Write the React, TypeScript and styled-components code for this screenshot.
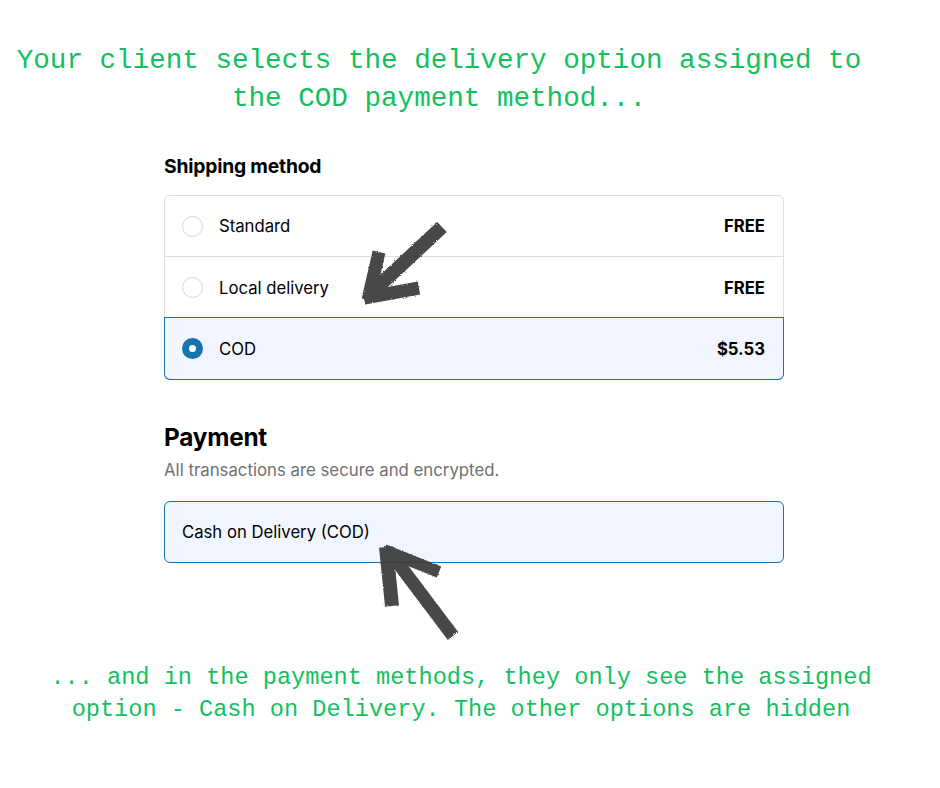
import React from "react"
import styled, { createGlobalStyle } from "styled-components"

const GlobalStyle = createGlobalStyle`
  html, body {
    margin: 0;
    padding: 0;
    background: #fff;
  }
  body {
    font-family: Inter, "Liberation Sans", sans-serif;
    color: #000;
  }
`

const Page = styled.div`
  position: relative;
  width: 940px;
  height: 788px;
  overflow: hidden;
`

const Caption = styled.p<{ $size: number; $line: number; $shift: number }>`
  margin: 0;
  font-family: "Liberation Mono", "DejaVu Sans Mono", monospace;
  font-size: ${(p) => p.$size}px;
  line-height: ${(p) => p.$line}px;
  color: #12c15e;
  text-align: center;
  padding-right: ${(p) => p.$shift}px;
  white-space: pre-line;
`

const TopCaption = styled(Caption)`
  padding-top: 42px;
`

const BottomCaption = styled(Caption)`
  margin-top: 99px;
`

const Checkout = styled.div`
  width: 620px;
  margin-left: 164px;
  margin-top: 36px;
`

const SectionTitle = styled.h2<{ $size: number; $line: number; $gap?: number }>`
  margin: ${(p) => p.$gap ?? 0}px 0 0;
  font-size: ${(p) => p.$size}px;
  line-height: ${(p) => p.$line}px;
  font-weight: 700;
  letter-spacing: -0.2px;
`

const Subtitle = styled.p`
  margin: 8px 0 0;
  font-size: 16.8px;
  line-height: 20px;
  color: #707070;
`

const OptionList = styled.div`
  margin-top: 17px;
  border: 1px solid #dedede;
  border-radius: 6px;
`

const OptionRow = styled.div<{ $selected?: boolean }>`
  display: flex;
  align-items: center;
  gap: 16px;
  height: ${(p) => (p.$selected ? "61px" : "62px")};
  padding: 0 18px;
  box-sizing: border-box;
  font-size: 16.7px;
  background: ${(p) => (p.$selected ? "#f0f5ff" : "transparent")};
  border-top: ${(p) => (p.$selected ? "none" : "1px solid #dedede")};
  box-shadow: ${(p) => (p.$selected ? "0 0 0 1px #1773b0" : "none")};
  border-radius: ${(p) => (p.$selected ? "0 0 5px 5px" : "0")};

  &:first-child {
    border-top: none;
    height: 60px;
  }
`

const Radio = styled.span<{ $checked?: boolean }>`
  flex: none;
  width: 21px;
  height: 21px;
  box-sizing: border-box;
  border-radius: 50%;
  background: #fff;
  border: ${(p) => (p.$checked ? "7px solid #1773b0" : "1px solid #d6d6d6")};
  margin-left: -1px;
`

const Label = styled.span`
  flex: 1;
`

const Price = styled.span`
  font-weight: 700;
`

const PaymentBox = styled.div`
  margin-top: 21px;
  height: 62px;
  box-sizing: border-box;
  display: flex;
  align-items: center;
  padding: 0 17px;
  background: #f0f5ff;
  border: 1px solid #1773b0;
  border-radius: 6px;
  font-size: 16.7px;
`

const Marks = styled.svg`
  position: absolute;
  left: 0;
  top: 0;
  pointer-events: none;
`

const shipping = [
  { name: "Standard", price: "FREE" },
  { name: "Local delivery", price: "FREE" },
  { name: "COD", price: "$5.53", selected: true },
]

const MarkerArrows = () => (
  <Marks width={940} height={788} viewBox="0 0 940 788">
    <defs>
      <filter id="rough" x="-10%" y="-10%" width="120%" height="120%">
        <feTurbulence type="fractalNoise" baseFrequency="0.9" numOctaves="2" result="noise" />
        <feDisplacementMap in="SourceGraphic" in2="noise" scale="2.5" />
      </filter>
    </defs>
    <g stroke="#3a3a3a" strokeLinecap="butt" fill="none" filter="url(#rough)" opacity="0.93">
      <line x1="442" y1="227" x2="369" y2="295" strokeWidth="14" />
      <line x1="368" y1="300" x2="379" y2="252" strokeWidth="13" />
      <line x1="364" y1="298" x2="419" y2="288" strokeWidth="13" />

      <line x1="389" y1="551" x2="453" y2="636" strokeWidth="13" />
      <line x1="386" y1="547" x2="392" y2="606" strokeWidth="14" />
      <line x1="384" y1="550" x2="439" y2="572" strokeWidth="12" />
    </g>
  </Marks>
)

export default function App() {
  return (
    <Page>
      <GlobalStyle />
      <TopCaption $size={27.6} $line={38} $shift={62}>
        {"Your client selects the delivery option assigned to\nthe COD payment method..."}
      </TopCaption>

      <Checkout>
        <SectionTitle $size={19.3} $line={24}>Shipping method</SectionTitle>
        <OptionList>
          {shipping.map((s) => (
            <OptionRow key={s.name} $selected={s.selected}>
              <Radio $checked={s.selected} />
              <Label>{s.name}</Label>
              <Price>{s.price}</Price>
            </OptionRow>
          ))}
        </OptionList>

        <SectionTitle $size={24.3} $line={30} $gap={42}>
          Payment
        </SectionTitle>
        <Subtitle>All transactions are secure and encrypted.</Subtitle>
        <PaymentBox>Cash on Delivery (COD)</PaymentBox>
      </Checkout>

      <BottomCaption $size={23.6} $line={32} $shift={18}>
        {"... and in the payment methods, they only see the assigned\noption - Cash on Delivery. The other options are hidden"}
      </BottomCaption>

      <MarkerArrows />
    </Page>
  )
}
